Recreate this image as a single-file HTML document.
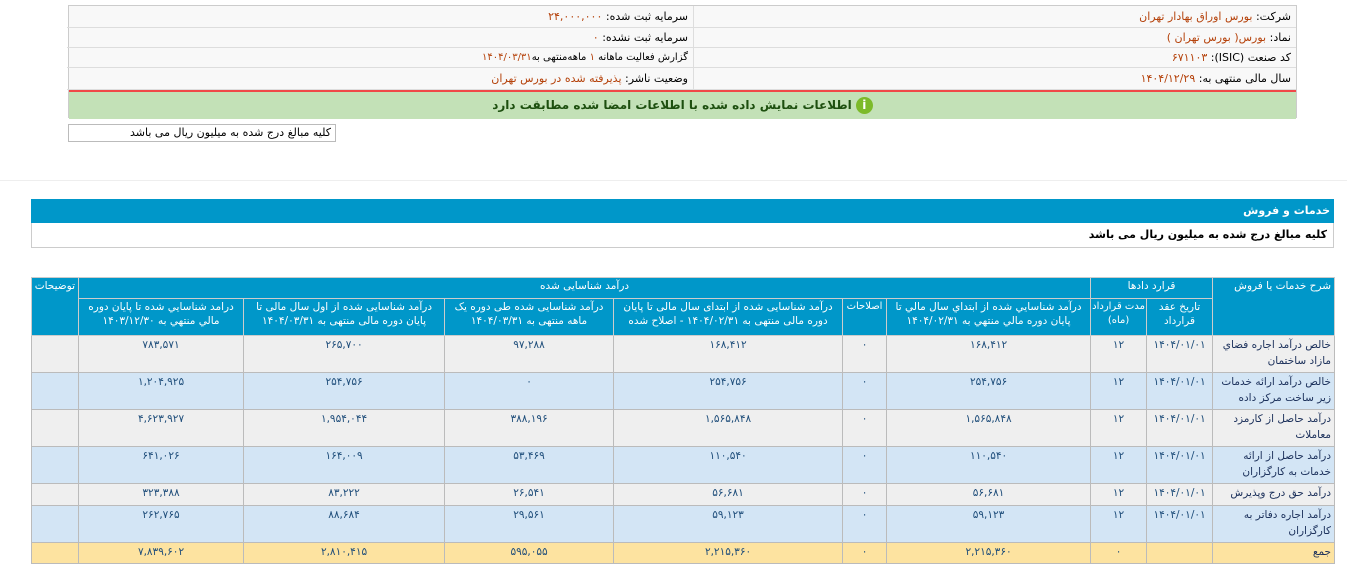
<!DOCTYPE html>
<html><head><meta charset="utf-8">
<style>
*{box-sizing:border-box;margin:0;padding:0}
body{width:1347px;height:572px;background:#fff;font-family:"DejaVu Sans","Liberation Sans",sans-serif;font-size:11px;position:relative;overflow:hidden;direction:rtl}
.abs{position:absolute}
.top{left:68px;top:5px;width:1229px;height:113px;border:1px solid #ccc;background:#f8f8f8}
.r{position:absolute;height:20px;line-height:20px;border-bottom:1px solid #ddd;padding-right:5px;white-space:nowrap;color:#000;font-size:11px}
.v{color:#b5420b}
table{border-collapse:collapse;table-layout:fixed;position:absolute;left:31px;top:277px;width:1303px}
td,th{border:1px solid #bbb;font-weight:normal;vertical-align:top;padding:1px 3px;font-size:10.5px;overflow:hidden}
th{background:#0097c9;color:#fff;text-align:center;line-height:14px;border-color:#ccc}
td{color:#1e4d7a;text-align:center;line-height:16px}
td.d{text-align:right;color:#1a2f5a}
tr.a td{background:#efefef}
tr.b td{background:#d3e5f5}
tr.t td{background:#fde3a0}
</style></head><body>
<div class="abs top">
 <div class="r" style="right:0;top:0;width:603px;height:22px;line-height:22px;border-left:1px solid #ddd">شرکت: <span class="v">بورس اوراق بهادار تهران</span></div>
 <div class="r" style="right:0;top:22px;width:603px;border-left:1px solid #ddd">نماد: <span class="v">بورس( بورس تهران )</span></div>
 <div class="r" style="right:0;top:42px;width:603px;border-left:1px solid #ddd">کد صنعت (ISIC): <span class="v">۶۷۱۱۰۳</span></div>
 <div class="r" style="right:0;top:62px;width:603px;height:22px;line-height:22px;border-left:1px solid #ddd">سال مالی منتهی به: <span class="v">۱۴۰۴/۱۲/۲۹</span></div>
 <div class="r" style="right:603px;top:0;width:626px;height:22px;line-height:22px">سرمایه ثبت شده: <span class="v">۲۴,۰۰۰,۰۰۰</span></div>
 <div class="r" style="right:603px;top:22px;width:626px">سرمایه ثبت نشده: <span class="v">۰</span></div>
 <div class="r" style="right:603px;top:42px;width:626px;font-size:10px">گزارش فعالیت ماهانه <span class="v">۱</span> ماهه‌منتهی به<span class="v">۱۴۰۴/۰۳/۳۱</span></div>
 <div class="r" style="right:603px;top:62px;width:626px;height:22px;line-height:22px">وضعیت ناشر: <span class="v">پذیرفته شده در بورس تهران</span></div>
 <div class="abs" style="left:0;right:0;top:84px;height:2px;background:#f04848"></div>
 <div class="abs" style="left:0;right:0;top:86px;height:27px;background:#c3e1b7;text-align:center;line-height:27px;color:#1d4f0f;font-weight:bold;font-size:12px">
  <span style="display:inline-block;width:17px;height:17px;border-radius:50%;background:#7cba2a;color:#fff;line-height:17px;vertical-align:middle;font-size:12px;margin-left:4px">i</span>اطلاعات نمایش داده شده با اطلاعات امضا شده مطابقت دارد</div>
</div>
<div class="abs" style="left:68px;top:124px;width:268px;height:18px;border:1px solid #bbb;line-height:16px;padding-right:4px">کلیه مبالغ درج شده به میلیون ریال می باشد</div>
<div class="abs" style="left:0;top:180px;width:1347px;height:1px;background:#eee"></div>
<div class="abs" style="left:31px;top:199px;width:1303px;height:24px;background:#0097c9;color:#fff;font-weight:bold;line-height:24px;padding-right:4px">خدمات و فروش</div>
<div class="abs" style="left:31px;top:223px;width:1303px;height:25px;border:1px solid #ccc;border-top:none;font-weight:bold;line-height:24px;padding-right:6px">کلیه مبالغ درج شده به میلیون ریال می باشد</div>
<table>
<colgroup><col style="width:122px"><col style="width:66px"><col style="width:56px"><col style="width:204px"><col style="width:44px"><col style="width:229px"><col style="width:169px"><col style="width:201px"><col style="width:165px"><col style="width:47px"></colgroup>
<tr style="height:21px"><th rowspan="2" style="text-align:right">شرح خدمات یا فروش</th><th colspan="2">قرارد دادها</th><th colspan="6" style="text-align:center">درآمد شناسایی شده</th><th rowspan="2">توضیحات</th></tr>
<tr style="height:37px"><th>تاریخ عقد قرارداد</th><th style="padding:1px 0;font-size:10px">مدت قرارداد (ماه)</th><th>درآمد شناسايي شده از ابتداي سال مالي تا پايان دوره مالي منتهي به ۱۴۰۴/۰۲/۳۱</th><th style="padding:1px 0;font-size:10px">اصلاحات</th><th>درآمد شناسایی شده از ابتدای سال مالی تا پایان دوره مالی منتهی به ۱۴۰۴/۰۲/۳۱ - اصلاح شده</th><th>درآمد شناسایی شده طی دوره یک ماهه منتهی به ۱۴۰۴/۰۳/۳۱</th><th>درآمد شناسایی شده از اول سال مالی تا پایان دوره مالی منتهی به ۱۴۰۴/۰۳/۳۱</th><th>درامد شناسايي شده تا پايان دوره مالي منتهي به ۱۴۰۳/۱۲/۳۰</th></tr>
<tr class="a" style="height:37px"><td class="d">خالص درآمد اجاره فضاي مازاد ساختمان</td><td>۱۴۰۴/۰۱/۰۱</td><td>۱۲</td><td>۱۶۸,۴۱۲</td><td>۰</td><td>۱۶۸,۴۱۲</td><td>۹۷,۲۸۸</td><td>۲۶۵,۷۰۰</td><td>۷۸۳,۵۷۱</td><td></td></tr>
<tr class="b" style="height:37px"><td class="d">خالص درآمد ارائه خدمات زیر ساخت مرکز داده</td><td>۱۴۰۴/۰۱/۰۱</td><td>۱۲</td><td>۲۵۴,۷۵۶</td><td>۰</td><td>۲۵۴,۷۵۶</td><td>۰</td><td>۲۵۴,۷۵۶</td><td>۱,۲۰۴,۹۲۵</td><td></td></tr>
<tr class="a" style="height:37px"><td class="d">درآمد حاصل از کارمزد معاملات</td><td>۱۴۰۴/۰۱/۰۱</td><td>۱۲</td><td>۱,۵۶۵,۸۴۸</td><td>۰</td><td>۱,۵۶۵,۸۴۸</td><td>۳۸۸,۱۹۶</td><td>۱,۹۵۴,۰۴۴</td><td>۴,۶۲۳,۹۲۷</td><td></td></tr>
<tr class="b" style="height:37px"><td class="d">درآمد حاصل از ارائه خدمات به کارگزاران</td><td>۱۴۰۴/۰۱/۰۱</td><td>۱۲</td><td>۱۱۰,۵۴۰</td><td>۰</td><td>۱۱۰,۵۴۰</td><td>۵۳,۴۶۹</td><td>۱۶۴,۰۰۹</td><td>۶۴۱,۰۲۶</td><td></td></tr>
<tr class="a" style="height:22px"><td class="d">درآمد حق درج وپذیرش</td><td>۱۴۰۴/۰۱/۰۱</td><td>۱۲</td><td>۵۶,۶۸۱</td><td>۰</td><td>۵۶,۶۸۱</td><td>۲۶,۵۴۱</td><td>۸۳,۲۲۲</td><td>۳۲۳,۳۸۸</td><td></td></tr>
<tr class="b" style="height:37px"><td class="d">درآمد اجاره دفاتر به کارگزاران</td><td>۱۴۰۴/۰۱/۰۱</td><td>۱۲</td><td>۵۹,۱۲۳</td><td>۰</td><td>۵۹,۱۲۳</td><td>۲۹,۵۶۱</td><td>۸۸,۶۸۴</td><td>۲۶۲,۷۶۵</td><td></td></tr>
<tr class="t" style="height:21px"><td class="d">جمع</td><td></td><td>۰</td><td>۲,۲۱۵,۳۶۰</td><td>۰</td><td>۲,۲۱۵,۳۶۰</td><td>۵۹۵,۰۵۵</td><td>۲,۸۱۰,۴۱۵</td><td>۷,۸۳۹,۶۰۲</td><td></td></tr>
</table>
</body></html>
